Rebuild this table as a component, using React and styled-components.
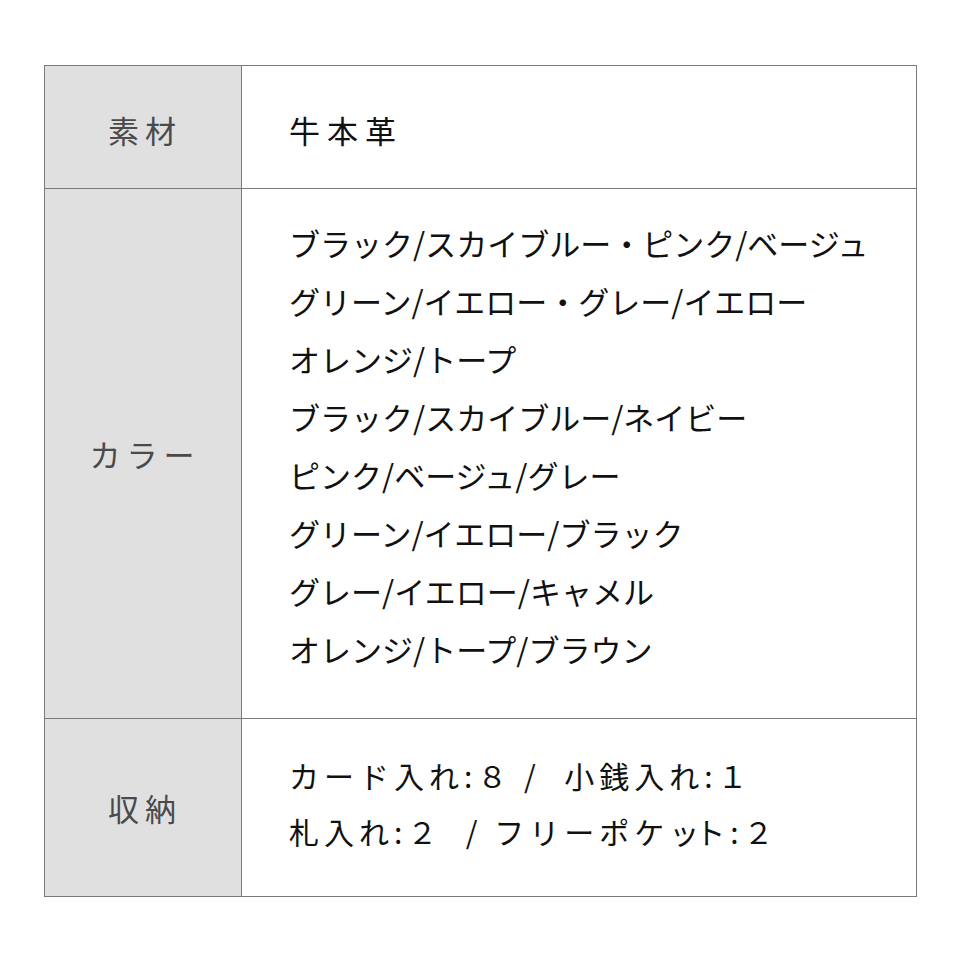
import React from "react";
import styled, { createGlobalStyle } from "styled-components";

const Global = createGlobalStyle`
  html, body { margin: 0; padding: 0; background: #fff; }
  body { font-family: "Noto Sans CJK JP", "Noto Sans", sans-serif; }
`;

const Page = styled.div`
  width: 960px;
  height: 960px;
  padding: 65px 0 0 44px;
  box-sizing: border-box;
`;

const Table = styled.div`
  width: 873px;
  display: grid;
  grid-template-columns: 197px 1fr;
  border: 1px solid #7a7a7a;
  box-sizing: border-box;
`;

const Label = styled.div`
  background: #e0e0e0;
  color: #4a4a4a;
  font-size: 31px;
  letter-spacing: 6px;
  display: flex;
  align-items: center;
  justify-content: center;
  padding: ${(p) => p.$pt || 0}px 0 ${(p) => p.$pb || 0}px 4px;
  height: ${(p) => p.$h}px;
  border-right: 1px solid #7a7a7a;
  border-top: ${(p) => (p.$first ? "none" : "1px solid #7a7a7a")};
  box-sizing: border-box;
`;

const Value = styled.div`
  color: #111;
  font-size: ${(p) => p.$fs || 31}px;
  letter-spacing: ${(p) => p.$ls || 0}px;
  display: flex;
  flex-direction: column;
  justify-content: center;
  padding: ${(p) => p.$pt || 0}px 0 ${(p) => p.$pb || 0}px 47px;
  height: ${(p) => p.$h}px;
  border-top: ${(p) => (p.$first ? "none" : "1px solid #7a7a7a")};
  box-sizing: border-box;
`;

const Line = styled.div`
  line-height: ${(p) => p.$lh}px;
  white-space: pre;
  ${(p) => (p.$ls != null ? `letter-spacing: ${p.$ls}px;` : "")}
`;

const Tight = styled.span`
  letter-spacing: -4px;
`;

const colors = [
  "ブラック/スカイブルー・ピンク/ベージュ",
  "グリーン/イエロー・グレー/イエロー",
  "オレンジ/トープ",
  "ブラック/スカイブルー/ネイビー",
  "ピンク/ベージュ/グレー",
  "グリーン/イエロー/ブラック",
  "グレー/イエロー/キャメル",
  "オレンジ/トープ/ブラウン",
];

export default function App() {
  return (
    <Page>
      <Global />
      <Table>
        <Label $first $h={122} $pt={4}>素材</Label>
        <Value $first $h={122} $ls={7} $pt={6}>
          <Line $lh={40}>牛本革</Line>
        </Value>
        <Label $h={530}>カラー</Label>
        <Value $h={530} $pb={15}>
          {colors.map((c) => (
            <Line key={c} $lh={58}>{c}</Line>
          ))}
        </Value>
        <Label $h={178}>収納</Label>
        <Value $h={178} $fs={30} $pb={9}>
          <Line $lh={56} $ls={5}>{"カード入れ:８ /  小銭入れ:１"}</Line>
          <Line $lh={56} $ls={5}>
            {"札入れ:２  / フリーポケ"}
            <Tight>ッ</Tight>
            {"ト:２"}
          </Line>
        </Value>
      </Table>
    </Page>
  );
}
